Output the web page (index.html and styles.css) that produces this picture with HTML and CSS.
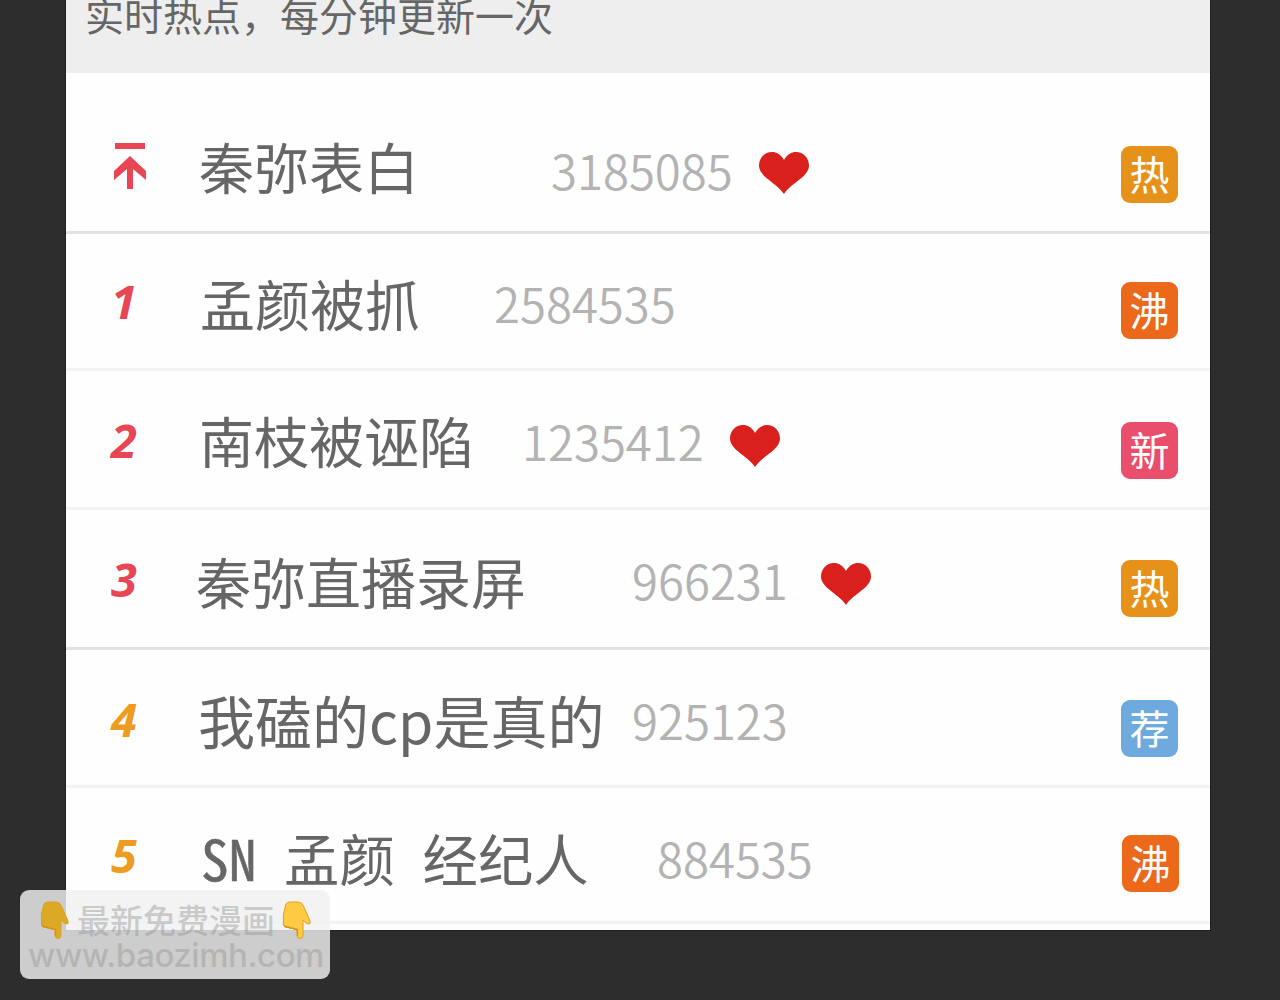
FILE: index.html
```html
<!DOCTYPE html>
<html lang="zh-CN">
<head>
<meta charset="utf-8">
<title>实时热点</title>
<link rel="stylesheet" href="styles.css">
</head>
<body>
<svg class="defs" aria-hidden="true">
  <symbol id="heart" viewBox="0 0 50 42"><path d="M25 8C22 2.500 17.500 0 13 0C5.500 0 0 6 0 13.500C0 25 17 30 25 42C33 30 50 25 50 13.500C50 6 44.500 0 37 0C32.500 0 28 2.500 25 8Z"/></symbol>
  <symbol id="hand" viewBox="0 0 29 38">
    <path class="hand-shape" d="M4 3Q5 1 8 1H16Q20 1 21.500 5L28 20Q29 23.500 26 23Q23.500 22 21 19V34.500Q21 37.500 18 37.500Q15 37.500 15 34.500V28.500Q12 29 10.500 27.500Q8 28 6.500 26.500Q3 27 1.500 24.500Q0 13 4 3Z"/>
    <path class="hand-line" d="M15.500 28V35M2 24.500Q4 26.500 6.500 26Q8 27.500 10.500 27Q13 28.500 15 28"/>
  </symbol>
</svg>
<main class="panel">
  <header class="intro">实时热点，每分钟更新一次</header>
  <ol class="list">
    <li class="row row-top">
      <span class="rank"><svg class="pin" viewBox="0 0 32 48"><path d="M1 1H31V7H1ZM16 14L32 29V38L19 27V47H13V27L0 38V29Z"/></svg></span>
      <span class="title">秦弥表白</span><span class="count">3185085</span><svg class="heart"><use href="#heart"/></svg><span class="badge hot">热</span>
    </li>
    <li class="row row-1">
      <span class="rank">1</span><span class="title">孟颜被抓</span><span class="count">2584535</span><span class="badge boil">沸</span>
    </li>
    <li class="row row-2">
      <span class="rank">2</span><span class="title">南枝被诬陷</span><span class="count">1235412</span><svg class="heart"><use href="#heart"/></svg><span class="badge new">新</span>
    </li>
    <li class="row row-3">
      <span class="rank">3</span><span class="title">秦弥直播录屏</span><span class="count">966231</span><svg class="heart"><use href="#heart"/></svg><span class="badge hot">热</span>
    </li>
    <li class="row row-4">
      <span class="rank low">4</span><span class="title">我磕的cp是真的</span><span class="count">925123</span><span class="badge rec">荐</span>
    </li>
    <li class="row row-5">
      <span class="rank low">5</span><span class="title half"><span class="latin">SN</span> 孟颜 经纪人</span><span class="count">884535</span><span class="badge boil">沸</span>
    </li>
  </ol>
</main>
<aside class="mark">
  <div class="mark-line"><svg class="hand dim"><use href="#hand"/></svg><span class="mark-text">最新免费漫画</span><svg class="hand"><use href="#hand"/></svg></div>
  <div class="mark-url">www.baozimh.com</div>
</aside>
</body>
</html>
```

FILE: styles.css
```css
* { box-sizing: border-box; }
body {
  margin: 0;
  height: 1000px;
  overflow: hidden;
  background: #2d2d2d;
  font-family: "Noto Sans CJK SC", sans-serif;
}
.defs { display: none; }
.panel {
  width: 1144px;
  height: 930px;
  margin-left: 66px;
  background: #fefefe;
  overflow: hidden;
  box-shadow: 0 0 0 1px #202020;
}
.intro {
  height: 73px;
  padding-left: 19px;
  background: #eee;
  color: #666;
  font-size: 39px;
  line-height: 28px;
  white-space: nowrap;
}
.list { margin: 0; padding: 0; list-style: none; }
.row {
  display: flex;
  align-items: flex-start;
  padding: 0 32px 0 44px;
  border-bottom: 3px solid #f3f3f3;
  white-space: nowrap;
}
.rank {
  width: 90px;
  margin-top: var(--rank);
  padding-left: 1px;
  flex: none;
  color: #e84555;
  font: italic 700 47px/58px "Noto Sans", sans-serif;
}
.rank.low { color: #ee9c20; }
.pin { display: block; width: 32px; height: 48px; margin-left: 3px; fill: currentColor; }
.title {
  width: var(--title-w);
  margin-top: var(--title);
  margin-left: var(--shift, 0);
  flex: none;
  color: #666;
  font-size: var(--size, 55px);
  line-height: 60px;
}
.half { font-feature-settings: "hwid"; }
.latin { -webkit-text-stroke: .6px #666; }
.count {
  margin-top: var(--count);
  padding-left: 1px;
  color: #b3b3b3;
  font-size: 47.3px;
  font-weight: 350;
  line-height: 62px;
}
.heart {
  width: 50px;
  height: 42px;
  margin: var(--heart) 0 0 auto;
  margin-right: var(--heart-r);
  fill: #d9201c;
}
.badge {
  width: 57px;
  height: 57px;
  margin: var(--badge) 0 0 auto;
  border-radius: 9px;
  color: #fff;
  font-size: 40px;
  line-height: 54px;
  text-align: center;
}
.heart + .badge { margin-left: 0; }
.hot { background: #e6911a; }
.boil { background: #ec681b; }
.new { background: #ea4e6d; }
.rec { background: #6eaade; }

.row-top { height: 161px; border-color: #e2e2e2; --rank: 69px; --title: 62px; --shift: -1px; --title-w: 351px; --count: 66px; --heart: 79px; --heart-r: 312px; --badge: 73px; }
.row-1 { height: 137px; --rank: 38px; --title: 38px; --title-w: 293px; --count: 38px; --badge: 48px; }
.row-2 { height: 139px; --rank: 40px; --title: 38px; --shift: -1px; --title-w: 322px; --count: 39px; --heart: 54px; --heart-r: 341px; --badge: 51px; }
.row-3 { height: 140px; border-color: #e2e2e2; --rank: 40px; --title: 40px; --shift: -4px; --title-w: 435px; --count: 39px; --heart: 53px; --heart-r: 250px; --badge: 50px; }
.row-4 { height: 138px; --rank: 40px; --title: 39px; --shift: -2px; --size: 57px; --title-w: 433px; --count: 39px; --badge: 50px; }
.row-5 { height: 136px; padding-right: 31px; --rank: 38px; --title: 39px; --shift: 1px; --size: 55.4px; --title-w: 455px; --count: 39px; --badge: 47px; }

.mark {
  position: absolute;
  left: 20px;
  top: 890px;
  width: 310px;
  height: 89px;
  border-radius: 9px;
  background: rgba(240, 240, 240, .82);
  color: rgba(150, 150, 150, .45);
}
.mark-line { display: flex; padding: 11px 0 0 20px; height: 47px; }
.mark-text { width: 213px; padding-left: 8px; font-size: 33px; font-weight: 500; line-height: 36px; white-space: nowrap; }
.hand { width: 29px; height: 38px; flex: none; color: #fecb42; }
.hand.dim { color: #dba926; }
.hand-shape { fill: currentColor; stroke: #dda023; stroke-width: 1; }
.hand-line { fill: none; stroke: #d4901b; stroke-width: 1.3; }
.mark-url { padding-left: 8px; font: 500 33px/36px Inter, sans-serif; letter-spacing: -.45px; }
```
